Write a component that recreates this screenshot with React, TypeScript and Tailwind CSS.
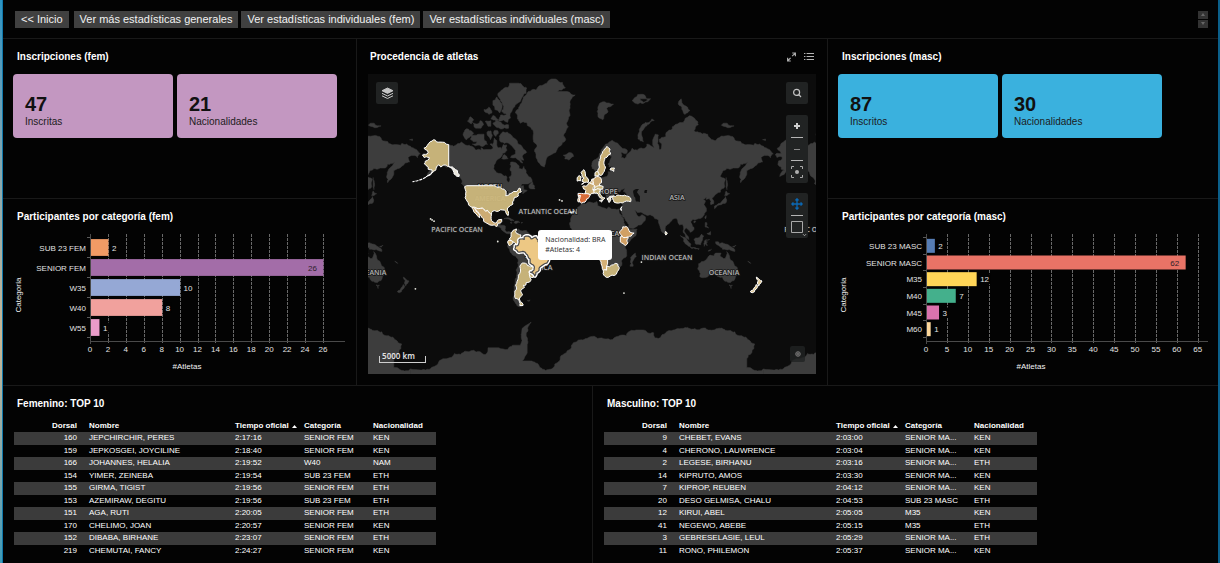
import React from "react";

type Bar = { label: string; value: number; color: string; inside?: boolean };
type Row = [string, string, string, string, string];

const FEM_BARS: Bar[] = [
  { label: "SUB 23 FEM", value: 2, color: "#f19b65" },
  { label: "SENIOR FEM", value: 26, color: "#a36da8", inside: true },
  { label: "W35", value: 10, color: "#95a8d5" },
  { label: "W40", value: 8, color: "#f1a19d" },
  { label: "W55", value: 1, color: "#e99cc9" },
];

const MASC_BARS: Bar[] = [
  { label: "SUB 23 MASC", value: 2, color: "#567db5" },
  { label: "SENIOR MASC", value: 62, color: "#e97366", inside: true },
  { label: "M35", value: 12, color: "#ffd557" },
  { label: "M40", value: 7, color: "#44b08c" },
  { label: "M45", value: 3, color: "#db73ae" },
  { label: "M60", value: 1, color: "#fdd79a" },
];

const FEM_ROWS: Row[] = [
  ["160", "JEPCHIRCHIR, PERES", "2:17:16", "SENIOR FEM", "KEN"],
  ["159", "JEPKOSGEI, JOYCILINE", "2:18:40", "SENIOR FEM", "KEN"],
  ["166", "JOHANNES, HELALIA", "2:19:52", "W40", "NAM"],
  ["154", "YIMER, ZEINEBA", "2:19:54", "SUB 23 FEM", "ETH"],
  ["155", "GIRMA, TIGIST", "2:19:56", "SENIOR FEM", "ETH"],
  ["153", "AZEMIRAW, DEGITU", "2:19:56", "SUB 23 FEM", "ETH"],
  ["151", "AGA, RUTI", "2:20:05", "SENIOR FEM", "ETH"],
  ["170", "CHELIMO, JOAN", "2:20:57", "SENIOR FEM", "KEN"],
  ["152", "DIBABA, BIRHANE", "2:23:07", "SENIOR FEM", "ETH"],
  ["219", "CHEMUTAI, FANCY", "2:24:27", "SENIOR FEM", "KEN"],
];

const MASC_ROWS: Row[] = [
  ["9", "CHEBET, EVANS", "2:03:00", "SENIOR MA...", "KEN"],
  ["4", "CHERONO, LAUWRENCE", "2:03:04", "SENIOR MA...", "KEN"],
  ["2", "LEGESE, BIRHANU", "2:03:16", "SENIOR MA...", "ETH"],
  ["14", "KIPRUTO, AMOS", "2:03:30", "SENIOR MA...", "KEN"],
  ["7", "KIPROP, REUBEN", "2:04:12", "SENIOR MA...", "KEN"],
  ["20", "DESO GELMISA, CHALU", "2:04:53", "SUB 23 MASC", "ETH"],
  ["12", "KIRUI, ABEL", "2:05:05", "M35", "KEN"],
  ["41", "NEGEWO, ABEBE", "2:05:15", "M35", "ETH"],
  ["3", "GEBRESELASIE, LEUL", "2:05:29", "SENIOR MA...", "ETH"],
  ["11", "RONO, PHILEMON", "2:05:37", "SENIOR MA...", "KEN"],
];

/* Coast lines as "lon lat" pairs, projected with Web Mercator. */
const LAND: string[] = [
  // North America
  "-168 65.6,-166 66.3,-162 66.2,-166 68.3,-163 69.2,-160 70.4,-156.5 71.3,-150 70.5,-141 69.6,-136 69,-133 69.6,-130 70,-128 70.5,-124 69.5,-120 69.4,-115 68.5,-114 67.7,-108 67.5,-108 68.5,-102 67.8,-98 67.8,-96 68.2,-96 70,-94.5 71.8,-92 71,-92 69.5,-90.5 68.5,-88 68.6,-87 67.5,-85.5 69.6,-82 69.5,-81.5 67.5,-86 66.3,-87 65.2,-89 64.2,-91 63.7,-93.5 61.8,-94.7 60,-94.6 58.6,-92.5 57,-88 56.5,-82.5 55.2,-82 53,-80 51.3,-78.8 52,-79.5 54.5,-77 56,-77 57.5,-78.5 58.8,-77.5 60,-77.8 62.4,-74 62.3,-71 61.2,-70 61,-69.5 59.2,-66 58.8,-64.5 60.3,-62 57.8,-61.5 56.4,-60 55.2,-57.5 54.4,-56 52.7,-56 51.5,-60 50.2,-66.5 50.2,-70 47,-65 49.2,-64.5 46.3,-61 45.7,-63.5 44.6,-66 43.6,-65 45.4,-67 44.8,-70.5 43.4,-70 41.7,-74 40.6,-74.5 39.2,-76 37,-75.6 35.2,-78 34,-81 32,-81.3 30,-80.1 27,-80.4 25.2,-81.7 26,-82.8 28,-84 30,-88 30.4,-90 29.2,-94 29.6,-97.3 27.8,-97.8 22.4,-96 19.2,-94.5 18.2,-91.8 18.6,-90.5 19.8,-90.3 21,-87 21.5,-87.5 19.5,-88.3 17.5,-88.8 15.9,-86 15.9,-83.3 15,-83.7 11,-82 9,-79.6 9.5,-77.3 8.6,-78.2 7.5,-80.5 7.3,-83 8.2,-85.8 10.2,-87.6 12.9,-92 14.4,-94.5 16.2,-97 15.8,-101 17.3,-105.5 20,-105.5 22.2,-109 25.6,-112.5 29.5,-114.7 31.7,-113.2 29,-109.4 23.1,-112 25.2,-115 28,-117.1 32.5,-120.6 34.5,-122.5 37.8,-124.3 40.3,-124 46.2,-124.7 48.4,-122.8 49,-127.5 51,-130.3 54.5,-134.5 58,-139.8 59.7,-146 61,-149.5 59.8,-151.5 61,-154 59,-158 56.8,-163.5 54.8,-158 58.3,-162 58.8,-162 60,-165.3 61.2,-164.5 63,-161 63.8,-161 64.6,-166.3 64.5",
  // Greenland
  "-73 78.3,-68 80,-65 81.2,-60 82,-52 82.2,-46 82.8,-40 83.3,-32 83.6,-25 83.2,-22 82.5,-30 82,-20 82,-12 81.5,-17 80,-18 78.5,-19 77,-21 76,-19 75,-22 73.5,-24 72.5,-22 71,-25 70.3,-30 68.2,-36 65.8,-40 65,-42.5 61.5,-43.5 60,-47 60.8,-50 62.5,-52 64.5,-53.5 67,-51 69.5,-54.5 70.5,-55 72.5,-58 75,-62 76.2,-68 76,-71 77",
  // Baffin
  "-61.5 66.7,-67.5 69.5,-72 71.3,-78 73,-81 73.6,-86 73.7,-89.5 72.5,-88 70.5,-84 70,-79 69.8,-76 68.8,-73 67.5,-73 66,-77 65.3,-78 64.5,-73 64.4,-68 62.5,-65.5 62,-68 64,-64.5 63.3,-66 65",
  // Ellesmere
  "-90 76.5,-81 76.2,-78 77.2,-76 79,-72 80,-66 81.2,-61.5 82.5,-70 83.1,-79 83.1,-86 82.3,-91 81.7,-88 80.5,-85 79.6,-87 78.6,-82 78,-88 77.9",
  // Axel Heiberg and neighbours
  "-96 80.6,-92 81.2,-89 80.6,-86.5 79.7,-89 78.3,-94 79,-96 79.8",
  "-105 79,-100 78,-97 78.3,-100 79.5",
  "-98 77,-93 76.6,-90 76.8,-96 77.8",
  // Devon
  "-92 76.7,-87 76,-80 75.6,-80 74.7,-88 74.5,-92 74.9,-96 76",
  // Victoria
  "-117 69.8,-114 69.2,-106 68.9,-101.5 69.7,-105 71.5,-105 73,-109 73,-113 72.7,-118 72.7,-119 71.4,-112 70.6",
  // Banks
  "-125.5 72.3,-123 71.2,-119 72.3,-115.5 73.3,-121 74.5,-124.5 74.2",
  // Melville, Bathurst, Prince of Wales, Somerset, Southampton
  "-117 76.2,-115 75,-108 74.7,-105.5 75.6,-109 76.6,-112 75.8",
  "-104 76.4,-101 75.2,-98 75.2,-98 76.6",
  "-102 73,-98.5 71.3,-96.5 72.6,-98 74,-101 73.9",
  "-95.5 73.5,-93 72.3,-90.5 73.2,-91 74,-94.5 74.1",
  "-87 64,-83 63.8,-80.5 64,-84 65.8",
  "-122 76.5,-118 75.8,-115.5 76.8,-119 77.5",
  "-99 69.8,-96 68.8,-97 69.9",
  // Newfoundland, Vancouver
  "-59.3 47.7,-56 46.8,-53 46.8,-53.5 48.7,-55.8 51.5,-57.5 50.5",
  "-128.3 50.8,-125 49.5,-123.5 48.4,-125.5 48.8",
  // Cuba, Hispaniola, Jamaica, Puerto Rico
  "-84.8 22,-81 23.1,-77 21.8,-74.2 20.2,-77.5 19.9,-79 21.3",
  "-74.4 18.4,-73 19.9,-70 19.8,-68.5 18.6,-71.5 17.8",
  "-78.3 18.4,-76.3 18.2,-77.3 17.8",
  "-67.2 18.4,-65.7 18.4,-66.5 17.9",
  // South America
  "-77.3 8.6,-75.5 10.7,-72 12.3,-71.5 11,-70 12,-68 10.6,-64 10.5,-61.8 10.7,-60 8.5,-57 6,-52 4.8,-50 1.2,-50 -0.8,-47 -0.7,-44.3 -2.6,-40 -2.8,-37 -4.8,-35 -6,-34.9 -8.5,-37 -11.5,-39 -13.5,-39 -17.8,-41 -22,-44.5 -23.2,-48.3 -25.8,-48.8 -28.5,-52 -32.6,-54.8 -34.8,-58 -34.2,-57 -36.5,-58.5 -38.5,-62 -39,-62.3 -40.8,-65 -41,-63.8 -42.8,-67.4 -46,-65.8 -47.8,-69 -50.8,-68.4 -52.5,-65.3 -54.8,-69 -55.5,-73 -53.5,-75.5 -50,-74.2 -44,-73.5 -40,-73.3 -37,-71.5 -32,-70.2 -25,-70.3 -18.3,-76 -14,-79 -8,-81.2 -5,-80 -3,-81 -1,-80 0.8,-77.5 3.8,-77.3 7",
  // Iceland, Ireland, Great Britain
  "-24.3 65.5,-20.5 66,-16 66.5,-13.7 65,-18.5 63.4,-22.6 63.9,-22 64.8",
  "-10 52,-6.5 52.2,-6 54.5,-8 55.3,-10 54",
  "-5.5 50,1.3 51.2,1.6 52.7,-1.5 55,-2 57.6,-3.2 58.6,-6 57,-5 54.7,-3 53.8,-4.6 53.2,-5 51.8,-3 51.3",
  // Eurasia
  "-9.3 43,-1.8 43.4,-1.2 45.8,-4.6 48.4,-1.6 48.7,1.5 50.2,4 51.8,8.3 53.7,8.2 57,10.6 57.7,10 54.6,14 54,18.6 54.6,21 55.3,21.5 57.5,24 57.2,23.5 59,28 59.6,30 60,25 60.2,22.4 60,21.3 61.5,25.3 65,22 65.7,17.2 61.7,18.8 60,16.5 57,14.2 55.4,12.8 55.6,11.2 58.8,8 58.1,5.2 59.3,5 61.8,10.5 64.2,14.5 67.7,19 69.8,25.7 71.1,31 70.2,33 69.4,41 67.6,40.5 66.3,35 66.7,34.8 64.4,38 64,40 65,40 64.5,42.3 66.4,46 68.3,48 67.6,54 68.3,60 68.6,61 69.8,65 69.2,68.5 68.4,67 69.5,67 71.2,69.5 73,72.8 72.8,72 70,73.5 67.8,75 67.8,73.5 71.4,76 72,80.5 72.3,81 73.6,87 74.5,87 75.1,98 76.2,104.3 77.7,111 76.7,113.5 75.6,109 74,113 73.7,123 73,129 71.2,131.5 71,139.5 72.4,149 72.2,152.5 70.9,160 69.8,170 69.4,171 70,176 69.8,180 69,186 67.8,190 66.1,187 64.4,181 65.4,177.5 64.5,179 62.4,170.5 60,163 58,163 56,162 55,160 53.2,156.7 51,155.6 55,157 57.8,161.5 60.6,164 62.5,160 61.7,156.5 61.5,154.5 59.5,149 59.5,142.5 59.3,135.5 55,138 54,141 53,140.5 48.5,136 44.5,132 43.2,129.8 41.5,127.5 39.5,129.4 37,129 35.3,126.4 34.5,126.5 37.5,124.8 39.8,121.5 39,121.8 40.8,118 39,120.8 37.7,119.2 35,121.8 31.7,121.8 29,118.5 24.6,114 22.3,110 21,108 21.6,106 20,107 17,109.2 13.5,109 11.5,105 8.8,104.8 10.4,102.5 12,101 13.4,100 12,99.3 9.3,101 7,103.3 4.5,104 1.4,101.3 3,100.3 6,98.4 8.2,98.6 12,97.5 16.5,94.3 16,92.5 20.5,91 22.6,87 21.4,82.5 16.8,80.2 15.2,80 10.5,77.6 8.1,74.8 13,72.8 19,72.8 21,69 22.3,67 24.8,61.5 25.2,57 27,51.4 27.9,48.6 30.2,51.5 25,54 24.1,56.3 26,59.8 22.5,57.5 19,52.5 16,45 12.8,43.2 13,42.7 16.5,39 21.5,35 28,34.3 31.3,36 36.5,32 36,27.5 36.8,26.2 39.3,29 41.2,35 42,41.5 41.5,37 45,39 47.2,35 46.3,33.5 44.5,30.5 46.3,28 43.8,28.5 41.5,26 40.8,23.5 40.3,24 38,22.5 36.5,19.5 40.5,19.5 41.8,13.6 45.6,12.4 44.5,14 42.4,18.4 40,16.8 39.2,15.8 38,12 41.8,8.8 44.4,3.2 43.2,3.2 41.8,-0.3 39.4,-2 36.8,-5.5 36,-9 37,-9.3 39",
  // Africa
  "-6 35.8,-1.5 35.2,3 36.9,10 37.3,11 33.8,15.5 32.3,20 31,22 32.8,29 30.9,34.2 31.2,32.6 29.9,35.5 24,37.3 21,37.5 18.5,39.6 15.4,43.2 12.4,43.3 11.4,51.1 11.9,50.5 9,46.5 3,41.6 -1.8,39 -5,40.5 -10.5,40.5 -15,35 -20,35.5 -24,32.7 -26,31 -29.8,27.5 -33.2,20 -34.8,18.3 -33.8,15 -27,14.4 -22.5,11.8 -17,13.7 -11,12 -5.8,9 -1,9.6 3.8,4.5 6.3,-3 5,-7.7 4.4,-13 8.3,-17 13.5,-16.5 19.5,-16 23.8,-13 27.7,-9.7 30,-9.6 32.3",
  // Madagascar, Sri Lanka
  "49.3 -12.1,50.3 -15.8,47 -25,44 -25,44.4 -20,44.5 -16.5",
  "80 9.6,81.8 7.5,80.4 6",
  // Svalbard, Franz Josef, Novaya Zemlya, Severnaya Zemlya, New Siberian Islands
  "11 79.3,16 76.8,18 78,21.5 78.5,20 79.2,27 80,18 80.4,12 79.8",
  "46 80.6,52 80,62 80.7,57 81.6,48 81",
  "65 80.9,58 80.2,54 80.9",
  "52 71.5,57.5 70.6,55.5 73,60 75.2,68.5 76.6,66 77,57 75.8,53.5 73.8",
  "96 80.9,93 80,100 78,105 78.8,99 79.8",
  "137 75.5,146 74.9,150 75.3,143 76,139 76",
  "179 71.3,182 71,182 71.5",
  // Sakhalin, Japan
  "142 54.2,143.4 50,142.7 46.3,142 48",
  "140.3 42,143 42,145.5 43.4,142 45.4,141 43.2",
  "141 41.3,142 39.5,140.8 35.8,137 34.7,133 34,130 31.3,130 33.6,134 35.6,137 37,139.8 39.5",
  // Taiwan, Hainan, Philippines
  "121.5 25.2,120.8 22,120.1 23.5",
  "109 20,111 19.8,109 18.2",
  "120.5 18.4,122.2 18.3,121.5 15,124 13,120.5 14",
  "122.3 7.5,126 9.6,126 6.3,124 6.5",
  // Borneo, Sumatra, Java, Sulawesi, Timor, New Guinea
  "109 1.5,113 3.2,117 7,119 5.2,117.8 1,116 -3.8,111 -3.3",
  "95.3 5.6,98 4,103.6 -1,106 -3.2,105.7 -5.9,102 -3.8,98.7 1.6",
  "105.3 -6.5,110 -6.6,114.4 -7.8,114 -8.6,107 -7.6",
  "119.8 0,121 1.2,125 1.5,120.5 0.4,123 -1,121.5 -2,122.5 -5,120.4 -3,119.5 -5.5",
  "123.5 -10.3,127 -8.4,124.5 -9",
  "131 -0.8,134 -0.8,135 -3.2,138 -1.7,144.5 -4,147.5 -6,150.8 -10.5,147 -9.5,143 -9,138 -8.3,138 -6.8,133 -4",
  "148.5 -5.6,152 -4.3,150 -6.3",
  // Australia and Tasmania
  "113.8 -22.5,116.8 -20.6,122.2 -18,125.5 -14.2,129.5 -15,131 -12.2,136.8 -12.2,135.6 -15,140.8 -17.6,142.5 -10.7,145.3 -15,146.3 -19,149.5 -22,153.2 -26,153 -31,150 -37.3,146.3 -39,143.5 -38.7,140.5 -38,138 -34.5,136 -34.8,131.2 -31.5,126 -32.3,123.5 -34,118 -35,115 -34.2,115.7 -31.5",
  "144.8 -40.8,148.3 -41,147 -43.6",
  // New Zealand
  "172.7 -34.5,175.5 -36.5,178.5 -37.7,177 -39.7,175.2 -41.6,173.8 -39.3,174.6 -37.5",
  "172.7 -40.5,174.2 -41.8,172.8 -43.8,170.7 -45.9,168.4 -46.6,166.5 -45.9,170.5 -43",
  // Falklands, New Caledonia
  "-61 -51.8,-58 -51.4,-59 -52.3",
  "164 -20.2,167 -22.3,165.5 -21.6",
  // Antarctica
  "-180 -78.3,-170 -78.5,-160 -78.3,-152 -77.2,-147 -76,-135 -74.6,-124 -74,-113 -74.2,-103 -74.8,-101 -73,-90 -73,-81 -73.5,-76 -72.2,-68 -72.2,-67 -69,-66.5 -67,-61 -64.6,-57 -63.4,-60 -65.4,-62 -68,-61 -72,-61 -74.5,-66 -76.5,-58 -76.5,-48 -78,-36 -78.3,-28 -76.5,-25 -75,-18 -73.6,-11 -71.2,0 -70,15 -69.8,32 -69.2,40 -69,50 -66.8,57 -66.8,68 -67.9,70 -69.8,75 -69.7,80 -68,88 -66.8,100 -65.8,110 -66.2,122 -66.5,135 -66.1,145 -67,155 -69,165 -70.5,171 -71.8,168 -74.5,163 -76,163 -78,170 -78.5,180 -78.3,180 -83,-180 -83",
];

/* Inner seas and large lakes. */
const WATER: string[] = [
  "47 45.5,50 46.8,53 46.8,51 44.5,54 41.5,54 37,50 37.3,49.3 40.3,47.5 43",
  "59 46,61.5 46,61 44,58.5 43.8",
  "-92 46.8,-88 48.6,-84.5 46.6,-88 46.8",
  "-88 42,-87 45.5,-85 45.8,-86.5 42.5",
  "-84 46,-80 45,-82.5 43",
];

type Country = { shape: string; fill: string };
const SAND = "#cdb87c";
const COUNTRIES: Country[] = [
  // Alaska
  { fill: SAND, shape: "-141 60.2,-141 69.6,-150 70.5,-156.5 71.3,-160 70.6,-163 69.3,-166.3 68.3,-162 66.5,-167.8 65.6,-166 64.5,-161 64.6,-161 63.8,-165 62.8,-166 61.6,-162 60,-162 58.8,-158 58.5,-158.5 56.8,-154 58.6,-151.5 61,-149 60,-146 61" },
  { fill: "#f5f1e6", shape: "-141 60.2,-139 60,-136 59.5,-130.2 55.8,-130.5 54.8,-133 55,-136.5 58" },
  { fill: "#f5f1e6", shape: "-158.5 56.8,-161 55.8,-164.5 54.4,-161 55.4" },
  // Contiguous United States
  { fill: SAND, shape: "-124.7 48.4,-122.8 49,-95 49,-89 48,-84.5 46.6,-82.5 45.3,-82.5 43,-83 41.9,-79 42.8,-79 43.4,-76.5 44,-75 45,-71.5 45,-69.2 47.4,-67.8 47,-67 44.8,-70.5 43.4,-70 41.7,-74 40.6,-74.5 39.2,-76 37,-75.6 35.2,-78 34,-81 32,-81.3 30,-80.1 27,-80.4 25.2,-81.7 26,-82.8 28,-84 30,-88 30.4,-90 29.2,-94 29.6,-97.3 27.8,-97.4 26,-99.5 27.5,-101.5 29.8,-103.2 29,-106.5 31.8,-111 31.3,-114.8 32.5,-117.1 32.5,-120.6 34.5,-122.5 37.8,-124.3 40.3,-124 46.2" },
  // Mexico
  { fill: "#d4b177", shape: "-117.1 32.5,-114.8 32.5,-111 31.3,-106.5 31.8,-103.2 29,-101.5 29.8,-99.5 27.5,-97.4 26,-97.8 22.4,-96 19.2,-94.5 18.2,-91.8 18.6,-90.5 21,-87 21.5,-88.3 18,-91 17.8,-92 14.6,-94.5 16.2,-97 15.8,-101 17.3,-105.5 20,-105.5 22.2,-109 25.6,-112.5 29.5,-114.7 31.7,-113.2 29,-109.4 23.1,-112 25.2,-115 28" },
  // Colombia, Ecuador
  { fill: "#cfb273", shape: "-77.3 8.6,-75.5 10.7,-72 12.2,-72.8 9.5,-70 7,-67.5 6.2,-67 2,-69.8 1.5,-70 -4.2,-74 -1.5,-77.5 0.5,-79 1.6,-77.4 4,-77.4 7" },
  { fill: "#dfbf7d", shape: "-80 0.8,-77.5 0.5,-75.3 -0.8,-79 -5,-80.2 -3.4,-81 -1" },
  // Argentina, Uruguay
  { fill: SAND, shape: "-66 -22,-62.7 -22.2,-57.7 -25.4,-54 -25.6,-53.8 -27.2,-57.6 -30.2,-58.3 -34,-57 -36.5,-58.5 -38.5,-62 -39,-62.3 -40.8,-65 -41,-63.8 -42.8,-67.4 -46,-65.8 -47.8,-69 -50.8,-68.4 -52.5,-65.3 -54.8,-68.5 -54.8,-69 -52.3,-73 -50.5,-71.8 -44,-71.3 -38,-70 -33,-68.4 -25" },
  { fill: SAND, shape: "-57.6 -30.2,-53.5 -32.8,-54.8 -34.8,-58.3 -34" },
  // Nordic and Baltic
  { fill: "#d0b578", shape: "11.2 58.8,12.8 55.6,14.2 55.4,16.5 57,18.8 60,17.2 61.7,22 65.7,24 65.9,23.5 68,20.3 69,16 67,14 64.3,12.2 62,12.5 60" },
  { fill: SAND, shape: "23.5 58.6,24.5 59.5,28 59.5,27.3 57.7" },
  { fill: SAND, shape: "8.2 55,8.2 57,10.6 57.7,12 55.2" },
  // British Isles
  { fill: SAND, shape: "-10 52,-6.5 52.2,-6 54.5,-8 55.3,-10 54" },
  { fill: SAND, shape: "-5.5 50,1.3 51.2,1.6 52.7,-1.5 55,-2 57.6,-3.2 58.6,-6 57,-5 54.7,-3 53.8,-4.6 53.2,-5 51.8,-3 51.3" },
  // Iberia
  { fill: "#e2bb83", shape: "-9 42,-6.5 42,-7.2 37.2,-9 37,-9.4 39" },
  { fill: "#e0703a", shape: "-9.2 43.6,-1.8 43.4,3.2 42.3,-0.3 39.4,-2 36.8,-5.5 36,-7.2 37.2,-6.5 42,-9 42" },
  // France, Low Countries, Germany, Switzerland and Austria
  { fill: "#d2b175", shape: "-1.8 43.4,-1.2 45.8,-4.6 48.4,-1.6 48.7,2 51,8 49,6 46.2,7.4 43.8,3.2 42.5" },
  { fill: "#dcbd85", shape: "2.5 51,5 53.3,7 53.2,6 50" },
  { fill: "#d5b076", shape: "6.5 53.4,10 54.8,14 54,14.8 51,12.5 50.2,13.5 48.6,12.8 47.6,7.6 47.6,8 49,6.2 50" },
  { fill: SAND, shape: "6 46.2,7.6 47.6,16.5 48.5,16 46.8,10 46.4" },
  // Italy and Sicily
  { fill: SAND, shape: "7.4 43.8,7 45.8,13.6 46.4,12.4 44.5,14 42.4,18.4 40,16.8 39.2,15.8 38,15 40,12 41.8,10 44" },
  { fill: SAND, shape: "12.6 38,15.4 38.1,15 36.8" },
  // Greece, Turkey, Israel
  { fill: "#e9e2cd", shape: "20.3 39.5,23 41.3,26.3 41.6,26 40.8,23.5 40.3,24 38,22.5 36.5" },
  { fill: SAND, shape: "26.2 39.3,26.5 41.8,29 41.2,35 42,41.5 41.5,44.5 40,44.6 37.2,36 36.2,32 36,27.5 36.8" },
  { fill: "#f5f1e6", shape: "34.3 31.3,35.5 33,35 29.6" },
  // Ethiopia, Kenya
  { fill: "#d9a566", shape: "36.5 14.3,40 14.5,42 12.5,42.8 10.5,48 8,45 5,42 4,39.5 3.6,36 4.5,33 8,35 11" },
  { fill: "#d9a566", shape: "34 4.3,36 4.5,39.5 3.6,41.8 4,41.6 -1.8,39.2 -4.6,34 -1" },
  // Namibia, South Africa
  { fill: "#dcb67a", shape: "11.8 -17,21 -18,21 -22,20 -24.8,20 -28.5,16.5 -28.6,14.4 -22.5" },
  { fill: SAND, shape: "16.5 -28.6,20 -28.5,20 -24.8,23 -25.3,27 -23.5,29.5 -22.2,31.5 -23,32.7 -26,32.8 -27,31 -29.8,27.5 -33.2,20 -34.8,18.3 -33.8" },
  // Sri Lanka
  { fill: "#e7dcae", shape: "80 9.6,81.8 7.5,80.4 6" },
  // New Zealand
  { fill: "#e7cf98", shape: "172.7 -34.5,175.5 -36.5,178.5 -37.7,177 -39.7,175.2 -41.6,173.8 -39.3,174.6 -37.5" },
  { fill: "#e7cf98", shape: "172.7 -40.5,174.2 -41.8,172.8 -43.8,170.7 -45.9,168.4 -46.6,166.5 -45.9,170.5 -43" },
];

const ALEUTIANS = "-164.5 54.4,-168 53.2,-173 52.2,-178 51.6";

const BRAZIL =
  "-60 5,-57 2,-52 4,-50 1.2,-50 -0.8,-44.3 -2.6,-40 -2.8,-35 -6,-34.9 -8.5,-39 -13.5,-39 -17.8,-41 -22,-44.5 -23.2,-48.3 -25.8,-48.8 -28.5,-53.2 -33.5,-57.6 -30.2,-53.8 -27.2,-54.5 -24,-58 -22,-58 -18,-60.3 -15,-62 -13,-65.3 -10.5,-70.5 -10.8,-73.5 -8,-73 -5,-70 -4.2,-69.5 0.8,-67 2,-64 1.5,-64 4";

const SPECKS: [number, number][] = [
  [-158, 21], [-156, 19.8], [-159.5, 22], [-28, 38.6], [-25.5, 37.8], [-17, 28.3], [-14, 28.5], [-15.5, 28],
  [-91, -0.5], [55.5, -21], [37.7, -46.8], [-175, -43.8],
];

const LABELS: [string, number, number][] = [
  ["NORTH", 122, 115],
  ["AMERICA", 122, 127],
  ["ATLANTIC OCEAN", 180, 140],
  ["PACIFIC OCEAN", 89, 158],
  ["EUROPE", 236, 120],
  ["ASIA", 309, 126],
  ["AFRICA", 239, 162],
  ["SOUTH", 169, 184],
  ["AMERICA", 169, 196],
  ["INDIAN OCEAN", 299, 186],
  ["OCEANIA", 356, 201],
];

type Pt = [number, number];
const WORLD = 353;
const project = (lon: number, lat: number): Pt => {
  const r = (lat * Math.PI) / 180;
  const m = Math.log(Math.tan(Math.PI / 4 + r / 2));
  return [219 + (lon * WORLD) / 360, 167 - (m * WORLD) / (2 * Math.PI)];
};

/* Splits a long edge into a rough coast. The result is the same from either
   end, so that neighbours which share an edge stay joined. */
const roughen = (a: Pt, b: Pt, depth: number): Pt[] => {
  const dx = b[0] - a[0];
  const dy = b[1] - a[1];
  const len = Math.hypot(dx, dy);
  if (depth === 0 || len < 2.5 || len > 60 || Math.abs(dx) < 0.05 || Math.abs(dy) < 0.05) return [b];
  const seed = Math.sin((a[0] + b[0]) * 12.9898 + (a[1] + b[1]) * 78.233) * 43758.5453;
  const k = (seed - Math.floor(seed) - 0.5) * 0.4 * (dx < 0 ? -1 : 1);
  const m: Pt = [(a[0] + b[0]) / 2 - dy * k, (a[1] + b[1]) / 2 + dx * k];
  return [...roughen(a, m, depth - 1), ...roughen(m, b, depth - 1)];
};

const points = (s: string): Pt[] =>
  s.split(",").map((p) => {
    const [lon, lat] = p.split(" ").map(Number);
    return project(lon, lat);
  });

const outline = (s: string) => {
  const pts = points(s);
  const all = pts.flatMap((p, i) => roughen(p, pts[(i + 1) % pts.length], 3));
  return "M" + all.map((p) => p.map((n) => n.toFixed(1)).join(" ")).join("L") + "Z";
};

const landPath = LAND.map(outline).join("");
const waterPath = WATER.map(outline).join("");

function WorldMap() {
  return (
    <svg viewBox="0 0 448 300" className="block h-auto w-full bg-[#0c0c0c]" role="img" aria-label="Procedencia de atletas">
      <defs>
        <g id="world">
          <path d={landPath} fill="#3d3d3d" stroke="#3d3d3d" strokeWidth="0.5" />
          <path d={waterPath} fill="#0f0f0f" />
        </g>
      </defs>
      <use href="#world" x={-WORLD} />
      <use href="#world" />
      <use href="#world" x={WORLD} />
      {[-WORLD, 0, WORLD].map((dx) => (
        <g
          key={dx}
          className="[font-family:'Open_Sans',sans-serif] text-[7px] font-semibold"
          fill="#b3b3b3"
          stroke="#1a1a1a"
          strokeWidth="1.5"
          paintOrder="stroke"
          textAnchor="middle"
        >
          {LABELS.filter(([, x]) => x + dx > -15 && x + dx < 450).map(([t, x, y]) => (
            <text key={t + y} x={x + dx} y={y}>
              {t}
            </text>
          ))}
        </g>
      ))}
      <g stroke="#ffffff" strokeWidth="1" strokeLinejoin="round" fillOpacity="0.95">
        {COUNTRIES.map((c) => (
          <path key={c.shape} d={outline(c.shape)} fill={c.fill} />
        ))}
      </g>
      <path d={"M" + points(ALEUTIANS).join("L")} fill="none" stroke="#ffffff" strokeWidth="1.2" strokeDasharray="3 1" />
      <path d={outline(BRAZIL)} fill="none" stroke="#ffffff" strokeWidth="4" strokeLinejoin="round" />
      <path d={outline(BRAZIL)} fill="#edc884" stroke="#4a4a4a" strokeWidth="1.2" strokeLinejoin="round" />
      {SPECKS.map(([lon, lat]) => {
        const [x, y] = project(lon, lat);
        return <circle key={`${lon}${lat}`} cx={x} cy={y} r="0.9" fill="#e8e8e0" />;
      })}
    </svg>
  );
}

const ToolGroup = ({ className, children }: { className: string; children: React.ReactNode }) => (
  <div className={`absolute flex flex-col items-center rounded-xs bg-[#212323] ${className}`}>{children}</div>
);

const Tool = ({ label, className, children }: { label: string; className?: string; children: React.ReactNode }) => (
  <button type="button" aria-label={label} className={`flex w-full items-center justify-center ${className ?? "h-[22px]"}`}>
    {children}
  </button>
);

const Divider = () => <span className="h-px w-3 bg-[#b5b5b5]" />;

function MapPanel() {
  return (
    <section className="h-full border-b border-[#191919] pt-[11px]">
      <div className="flex items-center justify-between px-[13px]">
        <Title>Procedencia de atletas</Title>
        <div className="flex items-center gap-2">
          <button type="button" aria-label="Ampliar">
            <svg width="9" height="10" viewBox="0 0 9 10" fill="none" stroke="#a9a9a9" strokeWidth="1.2">
              <path d="M5.2 4.2 8 1.4M5.2 1H8.4V4.2M3.6 5.8 1 8.5M0.6 5.8V9H3.8" />
            </svg>
          </button>
          <button type="button" aria-label="Leyenda">
            <svg width="10" height="8" viewBox="0 0 10 8" stroke="#b4b4b4" strokeWidth="1">
              <path d="M0 .5H1.4M2.6 .5H10M0 3.5H1.4M2.6 3.5H10M0 6.5H1.4M2.6 6.5H10" />
            </svg>
          </button>
        </div>
      </div>
      <div className="relative mx-[11px] mt-2.5">
        <WorldMap />
        <ToolGroup className="top-2 left-2 w-[22px]">
          <Tool label="Capas">
            <svg width="13" height="13" viewBox="0 0 13 13" fill="none" stroke="#c4c4c4" strokeWidth="1">
              <path d="M6.5 1 12 3.7 6.5 6.4 1 3.7Z" fill="#c4c4c4" />
              <path d="M1 6.3 6.5 9 12 6.3M1 8.8 6.5 11.5 12 8.8" />
            </svg>
          </Tool>
        </ToolGroup>
        <ToolGroup className="top-2 right-2 w-[22px]">
          <Tool label="Buscar">
            <svg width="10" height="10" viewBox="0 0 10 10" fill="none" stroke="#c4c4c4" strokeWidth="1.2">
              <circle cx="4.6" cy="4.4" r="3" />
              <path d="M6.8 6.6 9 9" />
            </svg>
          </Tool>
        </ToolGroup>
        <ToolGroup className="top-[41px] right-2 w-[22px]">
          <Tool label="Acercar">
            <svg width="6" height="6" viewBox="0 0 6 6" stroke="#cfcfcf" strokeWidth="2">
              <path d="M3 0V6M0 3H6" />
            </svg>
          </Tool>
          <Divider />
          <Tool label="Alejar">
            <svg width="6" height="6" viewBox="0 0 6 6" stroke="#8a8a8a" strokeWidth="1">
              <path d="M0 3.5H6" />
            </svg>
          </Tool>
          <Divider />
          <Tool label="Ajustar a los datos">
            <svg width="12" height="12" viewBox="0 0 12 12" fill="none" stroke="#a9a9a9" strokeWidth="1">
              <path d="M.5 3V.5H3M9 .5H11.5V3M11.5 9V11.5H9M3 11.5H.5V9" />
              <circle cx="6" cy="6" r="2" fill="#b0b0b0" stroke="none" />
            </svg>
          </Tool>
        </ToolGroup>
        <ToolGroup className="top-[119px] right-2 w-[22px]">
          <Tool label="Desplazar">
            <svg width="12" height="12" viewBox="0 0 12 12" fill="none" stroke="#0b68b4" strokeWidth="1.3">
              <path d="M6 1V11M1 6H11M4.4 2.4 6 .8 7.6 2.4M4.4 9.6 6 11.2 7.6 9.6M2.4 4.4.8 6 2.4 7.6M9.6 4.4 11.2 6 9.6 7.6" />
            </svg>
          </Tool>
          <Divider />
          <Tool label="Seleccionar área">
            <svg width="20" height="20" viewBox="0 0 20 20" fill="none" stroke="#a9a9a9" strokeWidth="1">
              <path d="M4.5 4.5H15.5V15.5H4.5Z" />
              <path d="M16 17.2 17.5 18.7 19 17.2" />
            </svg>
          </Tool>
        </ToolGroup>
        <ToolGroup className="right-[11px] bottom-3 w-[15px] opacity-80">
          <Tool label="Créditos del mapa" className="h-4">
            <svg width="6" height="6" viewBox="0 0 6 6" fill="none" stroke="#8d8d8d">
              <circle cx="3" cy="3" r="2.3" fill="#555" />
              <circle cx="3" cy="3" r=".6" />
            </svg>
          </Tool>
        </ToolGroup>
        <div className="absolute bottom-[11px] left-[11px] flex h-3 w-[47px] items-center justify-center border-b border-[#cfcfcf] pb-0.5 [font-family:'Noto_Sans',sans-serif] text-[8px] leading-none font-semibold text-[#e0e0e0]">
          <span className="absolute bottom-0 left-0 h-1.5 w-px bg-[#cfcfcf]" />
          <span className="absolute right-0 bottom-0 h-1.5 w-px bg-[#cfcfcf]" />
          <span className="pr-2 whitespace-nowrap">5000 km</span>
        </div>
        <div
          role="tooltip"
          className="absolute top-[156px] left-[38%] rounded-[3px] bg-white px-[7px] py-[5px] [font-family:'Noto_Sans',sans-serif] text-[7px] leading-[10px] whitespace-nowrap text-[#333]"
        >
          <p>Nacionalidad: BRA</p>
          <p>#Atletas: 4</p>
        </div>
      </div>
    </section>
  );
}

const Title = ({ children }: { children: React.ReactNode }) => (
  <h2 className="text-[10px] leading-[14px] font-bold text-white">{children}</h2>
);

const Kpi = ({ value, label, color }: { value: number; label: string; color: string }) => (
  <div className={`flex h-16 w-40 flex-col rounded pt-5 pl-3 text-[#111] ${color}`}>
    <span className="text-[20px] leading-5 font-bold">{value}</span>
    <span className="text-[10px] leading-4 text-[#1c1c1c]">{label}</span>
  </div>
);

function KpiPanel({ title, items, color }: { title: string; items: [number, string][]; color: string }) {
  return (
    <section className="h-40 border-b border-[#191919] pt-[11px]">
      <div className="px-[14px]">
        <Title>{title}</Title>
      </div>
      <div className="mt-2.5 flex gap-1 px-2.5">
        {items.map(([v, l]) => (
          <Kpi key={l} value={v} label={l} color={color} />
        ))}
      </div>
    </section>
  );
}

type ChartProps = {
  title: string;
  bars: Bar[];
  width: number;
  origin: number;
  unit: number;
  step: number;
  max: number;
  end: number;
  captionX: number;
};

function ChartPanel({ title, bars, width, origin, unit, step, max, end, captionX }: ChartProps) {
  const top = 13;
  const band = 100 / bars.length;
  const thick = band * 0.84;
  const ticks = Array.from({ length: max / step + 1 }, (_, i) => i * step);
  const edges = Array.from({ length: bars.length + 1 }, (_, i) => Math.round(top + i * band) + 0.5);
  return (
    <section className="border-b border-[#191919] pt-[11px]">
      <div className="px-[14px]">
        <Title>{title}</Title>
      </div>
      <svg viewBox={`0 0 ${width} 161`} className="block h-auto w-full text-[8px]" role="img" aria-label={title}>
        {ticks.slice(1).map((t) => {
          const x = Math.round(origin + t * unit) + 0.5;
          return <path key={t} d={`M${x} 10V119`} stroke="#686868" strokeDasharray="3 1" />;
        })}
        <path d={`M${origin + 0.5} 10V120M${origin} 117.5H${end}`} stroke="#4a4a4a" />
        {edges.map((y) => (
          <path key={y} d={`M${origin - 3} ${y}H${origin}`} stroke="#5a5a5a" />
        ))}
        {bars.map((b, i) => {
          const cy = top + 0.5 + (i + 0.5) * band;
          const w = b.value * unit;
          return (
            <g key={b.label}>
              <rect x={origin + 1} y={cy - thick / 2} width={w - 0.5} height={thick} fill={b.color} />
              {!b.inside && (
                <rect x={origin + w + 3} y={cy - 5} width={b.value > 9 ? 11 : 7} height="10" fill="#030303" />
              )}
              <text x={origin - 4} y={cy + 3} textAnchor="end" fill="#e2e2e2">
                {b.label}
              </text>
              <text
                x={b.inside ? origin + w - 6 : origin + w + 4}
                y={cy + 3}
                textAnchor={b.inside ? "end" : "start"}
                fill={b.inside ? "#2c2028" : "#e2e2e2"}
              >
                {b.value}
              </text>
            </g>
          );
        })}
        {ticks.map((t) => (
          <text key={t} x={origin + t * unit} y="128" textAnchor="middle" fill="#e2e2e2">
            {t}
          </text>
        ))}
        <text x={captionX} y="145" textAnchor="middle" fill="#f2f2f2">
          #Atletas
        </text>
        <text transform="translate(18 71) rotate(-90)" textAnchor="middle" fill="#f2f2f2">
          Categoría
        </text>
      </svg>
    </section>
  );
}

function TopTable({ title, rows, nameCol, tableWidth }: { title: string; rows: Row[]; nameCol: string; tableWidth: string }) {
  return (
    <section className="pt-[11px]">
      <div className="px-[14px]">
        <Title>{title}</Title>
      </div>
      <table
        aria-label={title}
        className={`mt-[9px] ml-[11px] h-[137px] table-fixed text-left text-[8px] leading-3 whitespace-nowrap text-white ${tableWidth}`}
      >
        <colgroup>
          <col className="w-[69px]" />
          <col className={nameCol} />
          <col className="w-[69px]" />
          <col className="w-[69px]" />
          <col className="w-[69px]" />
        </colgroup>
        <thead className="font-bold">
          <tr>
            <th className="px-1.5 py-0 text-right">Dorsal</th>
            <th className="px-1.5 py-0">Nombre</th>
            <th className="px-1.5 py-0" aria-sort="ascending">
              Tiempo oficial
              <svg width="5" height="3" viewBox="0 0 5 3" className="ml-[3px] inline align-baseline" fill="#fff">
                <path d="M0 3 2.5 0 5 3Z" />
              </svg>
            </th>
            <th className="px-1.5 py-0">Categoría</th>
            <th className="px-1.5 py-0">Nacionalidad</th>
          </tr>
        </thead>
        <tbody>
          {rows.map((r) => (
            <tr key={r[0]} className="odd:bg-[#3b3b3b]">
              {r.map((c, i) => (
                <td key={i} className={i === 0 ? "px-1.5 py-0 text-right" : "px-1.5 py-0"}>
                  {c}
                </td>
              ))}
            </tr>
          ))}
        </tbody>
      </table>
    </section>
  );
}

const NAV = [
  "Ver más estadísticas generales",
  "Ver estadísticas individuales (fem)",
  "Ver estadísticas individuales (masc)",
];

const NavLink = ({ children }: { children: React.ReactNode }) => (
  <a href="#" className="bg-[#404040] px-1.5 text-[11px] leading-[17px] whitespace-nowrap text-[#f2f2f2]">
    {children}
  </a>
);

export default function App() {
  return (
    <div className="flex min-h-screen bg-[#030303] [font-family:'Liberation_Sans',Arial,sans-serif]">
      <div className="w-[3px] shrink-0 border-r border-[#0f78aa] bg-linear-to-b from-[#2b93c2] via-[#c8b795] via-60% to-[#3c9ab8]" />
      <div className="min-w-0 flex-1">
        <header className="flex h-[39px] items-center justify-between border-b border-[#191919] pr-2.5 pl-3">
          <nav className="flex gap-[3px]">
            <span className="mr-0.5 flex">
              <NavLink>&lt;&lt; Inicio</NavLink>
            </span>
            {NAV.map((n) => (
              <NavLink key={n}>{n}</NavLink>
            ))}
          </nav>
          <div className="flex w-2.5 flex-col gap-px">
            <button type="button" aria-label="Subir" className="flex h-2 items-center justify-center bg-[#333]">
              <svg width="4" height="3" viewBox="0 0 4 3" fill="#666">
                <path d="M0 3 2 0 4 3Z" />
              </svg>
            </button>
            <button type="button" aria-label="Bajar" className="flex h-2 items-center justify-center bg-[#333]">
              <svg width="4" height="3" viewBox="0 0 4 3" fill="#666">
                <path d="M0 0 2 3 4 0Z" />
              </svg>
            </button>
          </div>
        </header>
        <main>
          <div className="grid grid-cols-[354fr_471fr_390fr]">
            <div className="min-w-0 border-r border-[#191919]">
              <KpiPanel
                title="Inscripciones (fem)"
                items={[
                  [47, "Inscritas"],
                  [21, "Nacionalidades"],
                ]}
                color="bg-[#c397c1]"
              />
              <ChartPanel
                title="Participantes por categoría (fem)"
                bars={FEM_BARS}
                width={353}
                origin={87}
                unit={8.96}
                step={2}
                max={26}
                end={342}
                captionX={184}
              />
            </div>
            <div className="min-w-0 border-r border-[#191919]">
              <MapPanel />
            </div>
            <div className="min-w-0">
              <KpiPanel
                title="Inscripciones (masc)"
                items={[
                  [87, "Inscritos"],
                  [30, "Nacionalidades"],
                ]}
                color="bg-[#3ab1de]"
              />
              <ChartPanel
                title="Participantes por categoría (masc)"
                bars={MASC_BARS}
                width={390}
                origin={98}
                unit={4.18}
                step={5}
                max={65}
                end={380}
                captionX={203}
              />
            </div>
          </div>
          <div className="grid grid-cols-[590fr_625fr]">
            <div className="min-w-0 border-r border-[#191919] pb-1.5">
              <TopTable title="Femenino: TOP 10" rows={FEM_ROWS} nameCol="w-[146px]" tableWidth="w-[422px]" />
            </div>
            <div className="min-w-0">
              <TopTable title="Masculino: TOP 10" rows={MASC_ROWS} nameCol="w-[157px]" tableWidth="w-[433px]" />
            </div>
          </div>
        </main>
      </div>
      <div className="w-0.5 shrink-0 bg-[#0b5f8a]" />
    </div>
  );
}
